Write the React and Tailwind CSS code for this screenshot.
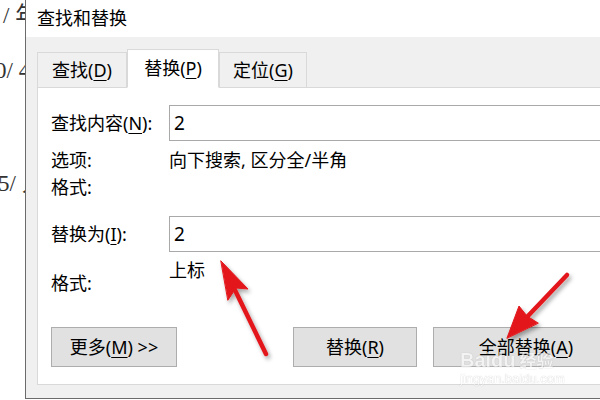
import React from "react";

const font = "font-['Noto_Sans','Noto_Sans_CJK_SC',sans-serif]";

const Key = ({ children }) => (
  <u className="underline underline-offset-[3px] decoration-1">{children}</u>
);

const Tab = ({ children, active, className }) => (
  <div
    className={`flex items-center justify-center border border-[#d9d9d9] ${className} ${
      active
        ? "h-[39px] bg-white border-b-white relative z-10 -mb-px"
        : "h-[35px] bg-[#f0f0f0] border-b-0"
    }`}
  >
    {children}
  </div>
);

const Button = ({ children, className }) => (
  <div
    className={`h-[40px] shrink-0 flex items-center justify-center bg-[#e1e1e1] border border-[#adadad] ${className}`}
  >
    {children}
  </div>
);

const Arrows = () => (
  <svg
    className="absolute inset-0 pointer-events-none"
    width="600"
    height="400"
    viewBox="0 0 600 400"
  >
    <defs>
      <filter id="sh" x="-20%" y="-20%" width="140%" height="140%">
        <feDropShadow dx="2" dy="3" stdDeviation="2" floodColor="#000" floodOpacity="0.35" />
      </filter>
    </defs>
    <g filter="url(#sh)" fill="#e3191c" stroke="#e3191c" strokeLinecap="round">
      <line x1="266" y1="354" x2="233" y2="286" strokeWidth="4.5" />
      <polygon points="221,261 248,289 236,288 228,300" strokeWidth="1" strokeLinejoin="round" />
      <line x1="567" y1="275" x2="527" y2="317" strokeWidth="4.5" />
      <polygon points="507,338 519,306 527,316 538,323" strokeWidth="1" strokeLinejoin="round" />
    </g>
  </svg>
);

export default function App() {
  return (
    <div className={`relative w-[600px] h-[400px] overflow-hidden bg-white flex ${font} text-black`}>
      {/* document behind the dialog */}
      <div className="w-[25px] shrink-0 overflow-hidden whitespace-nowrap text-[23px] text-[#333] font-['Liberation_Serif','Noto_Sans_CJK_SC',serif] leading-[28px]">
        <div className="mt-[2px] ml-[3px]">/ 年</div>
        <div className="mt-[27px] -ml-[5px]">0/ 4</div>
        <div className="mt-[85px] -ml-[2px]">5/ 人</div>
      </div>

      {/* dialog */}
      <div className="flex-1 min-w-0 flex flex-col border-l border-[#6b6b6b] h-[399px] border-b bg-[#f0f0f0]">
        <div className="h-[37px] bg-white flex items-center pl-[11px] text-[18px]">
          查找和替换
        </div>

        <div className="flex-1 flex flex-col pl-[11px] pt-[12px] pb-[13px]">
          <div className="flex items-end text-[18px] h-[38px]">
            <Tab className="w-[90px]">
              查找(<Key>D</Key>)
            </Tab>
            <Tab active className="w-[92px]">
              替换(<Key>P</Key>)
            </Tab>
            <Tab className="w-[88px]">
              定位(<Key>G</Key>)
            </Tab>
          </div>

          <div className="flex-1 overflow-hidden bg-white border-t border-l border-b border-[#d9d9d9] pl-[13px] pt-[17px] text-[18px] leading-[24px]">
            <div className="flex items-center">
              <div className="w-[118px]">
                查找内容(<Key>N</Key>):
              </div>
              <div className="flex-1 h-[36px] border border-[#a9a9a9] border-r-0 flex items-center pl-[4px] text-[19px]">
                2
              </div>
            </div>

            <div className="flex mt-[7px]">
              <div className="w-[118px]">选项:</div>
              <div>向下搜索, 区分全/半角</div>
            </div>
            <div className="flex mt-[3px]">
              <div className="w-[118px]">格式:</div>
            </div>

            <div className="flex items-center mt-[17px]">
              <div className="w-[118px]">
                替换为(<Key>I</Key>):
              </div>
              <div className="flex-1 h-[36px] border border-[#a9a9a9] border-r-0 flex items-center pl-[4px] text-[19px]">
                2
              </div>
            </div>

            <div className="flex items-start mt-[6px]">
              <div className="w-[118px] mt-[13px]">格式:</div>
              <div>上标</div>
            </div>

            <div className="flex items-center mt-[32px]">
              <Button className="w-[126px]">
                更多(<Key>M</Key>) &gt;&gt;
              </Button>
              <Button className="w-[124px] ml-[116px]">
                替换(<Key>R</Key>)
              </Button>
              <Button className="w-[186px] ml-[16px]">
                全部替换(<Key>A</Key>)
              </Button>
            </div>
          </div>
        </div>
      </div>

      {/* watermark */}
      <div className="absolute left-[460px] top-[350px] pointer-events-none opacity-60 font-['Liberation_Sans',sans-serif]">
        <div className="text-[20px] font-bold leading-[20px] text-white [text-shadow:0_0_1px_#888]">
          Baidu<span className="text-[17px] ml-[4px] font-['Noto_Sans_CJK_SC',sans-serif]">经验</span>
        </div>
        <div className="text-[13px] mt-[2px] leading-[14px] text-white [text-shadow:0_0_1px_#888]">
          jingyan.baidu.com
        </div>
      </div>

      <Arrows />
    </div>
  );
}
